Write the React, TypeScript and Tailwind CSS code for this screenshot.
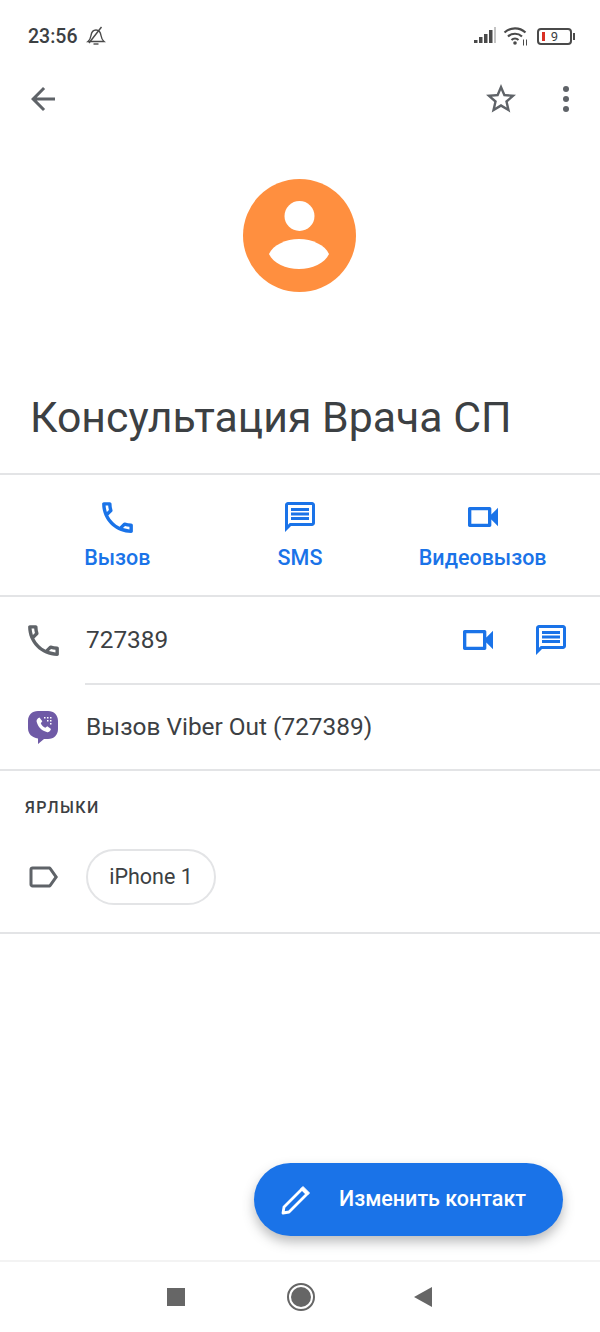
import React from "react";

const PHONE = "M6.54 5c.06.89.21 1.76.45 2.59l-1.2 1.2c-.41-1.2-.67-2.47-.76-3.79h1.51m9.86 12.02c.85.24 1.72.39 2.6.45v1.49c-1.32-.09-2.59-.35-3.8-.75l1.2-1.19M7.5 3H4c-.55 0-1 .45-1 1 0 9.39 7.61 17 17 17 .55 0 1-.45 1-1v-3.49c0-.55-.45-1-1-1-1.24 0-2.45-.2-3.57-.57-.1-.04-.21-.05-.31-.05-.26 0-.51.1-.71.29l-2.2 2.2c-2.83-1.45-5.15-3.76-6.59-6.59l2.2-2.2c.28-.28.36-.67.25-1.02C8.7 6.45 8.5 5.25 8.5 4c0-.55-.45-1-1-1z";
const MESSAGE = "M20 2H4c-1.1 0-2 .9-2 2v18l4-4h14c1.1 0 2-.9 2-2V4c0-1.1-.9-2-2-2zm0 14H5.17L4 17.17V4h16v12zM6 12h12v2H6zM6 9h12v2H6zM6 6h12v2H6z";
const VIDEO = "M15 8v8H5V8h10m1-2H4c-.55 0-1 .45-1 1v10c0 .55.45 1 1 1h12c.55 0 1-.45 1-1v-3.5l4 4v-11l-4 4V7c0-.55-.45-1-1-1z";
const LABEL = "M17.63 5.84C17.27 5.33 16.67 5 16 5L5 5.01C3.9 5.01 3 5.9 3 7v10c0 1.1.9 1.99 2 1.99L16 19c.67 0 1.27-.33 1.63-.84L22 12l-4.37-6.16zM16 17H5V7h11l3.55 5L16 17z";
const ARROW = "M20 11H7.83l5.59-5.59L12 4l-8 8 8 8 1.41-1.41L7.83 13H20v-2z";
const STAR = "M22 9.24l-7.19-.62L12 2 9.19 8.63 2 9.24l5.46 4.73L5.82 21 12 17.27 18.18 21l-1.63-7.03L22 9.24zM12 15.4l-3.76 2.27 1-4.28-3.32-2.88 4.38-.38L12 6.1l1.71 4.04 4.38.38-3.32 2.88 1 4.28L12 15.4z";

function Icon({ d, size, className }: { d: string; size: number; className?: string }) {
    return (
        <svg width={size} height={size} viewBox="0 0 24 24" fill="currentColor" className={className}>
            <path d={d} />
        </svg>
    );
}

function ViberIcon() {
    return (
        <svg width="32" height="34" viewBox="0 0 32 34">
            <path d="M11 1h10c6 0 10 4 10 10v8c0 6-4 10-10 10h-4l-6 5v-5.500C5 27.500 1 24 1 18v-7C1 5 5 1 11 1z" fill="#6f5aa6" />
            <path d="M10.500 8.500l2-1 2.800 3.800-1.500 2c.8 2 2.500 3.700 4.500 4.500l2-1.500 3.700 2.800-1 2c-.7 1-2 1.300-3.300.9-5.500-1.800-8.500-4.800-10-10-.3-1.400 0-2.700 1.300-3.500z" fill="#fff" />
            <g fill="#fff">
                <rect x="17" y="7" width="1.500" height="1.500" />
                <rect x="20" y="7" width="1.500" height="1.500" />
                <rect x="23" y="7" width="1.500" height="1.500" />
                <rect x="20" y="10" width="1.500" height="1.500" />
                <rect x="23" y="10" width="1.500" height="1.500" />
                <rect x="23" y="13" width="1.500" height="1.500" />
            </g>
        </svg>
    );
}

function StatusIcons() {
    return (
        <div className="flex items-center text-[#4a4a4a]">
            <svg width="24" height="18" viewBox="0 0 24 18" fill="currentColor" className="ml-[1px]">
                <rect x="1" y="13" width="3.500" height="3" />
                <rect x="6" y="10" width="3.500" height="6" />
                <rect x="11" y="7" width="3.500" height="9" />
                <rect x="16" y="3" width="3.500" height="13" />
                <rect x="21" y="0" width="2" height="16" fill="#c4c4c4" />
            </svg>
            <svg width="26" height="20" viewBox="0 0 26 20" fill="none" stroke="currentColor" strokeWidth="2.200" className="ml-[6px]">
                <path d="M1.500 6.500c6-5.500 15-5.500 21 0" />
                <path d="M5 10.500c4-3.700 10-3.700 14 0" />
                <path d="M8.500 14c2-1.800 5-1.800 7 0" />
                <circle cx="12" cy="17" r="1.800" fill="currentColor" stroke="none" />
                <path d="M20.500 13.500v6M23.500 13.500v6" strokeWidth="1" />
            </svg>
            <div className="ml-[8px] flex items-center">
                <div className="relative flex h-[17px] w-[35px] items-center justify-center rounded-[4px] border-2 border-[#4a4a4a]">
                    <div className="absolute left-[3px] h-[9px] w-[3px] bg-[#d93025]" />
                    <span className="text-[13px] leading-none text-[#3c4043]">9</span>
                </div>
                <div className="ml-[1px] h-[7px] w-[2px] bg-[#4a4a4a]" />
            </div>
        </div>
    );
}

function ActionButton({ d, size, label }: { d: string; size: number; label: string }) {
    return (
        <div className="flex flex-col items-center">
            <div className="flex h-[44px] items-center justify-center">
                <Icon d={d} size={size} />
            </div>
            <span className="mt-[4px] text-[21.500px] leading-[30px] font-medium whitespace-nowrap">{label}</span>
        </div>
    );
}

export default function App() {
    return (
        <div className="relative flex h-[1332px] w-[600px] flex-col overflow-hidden bg-white font-['Roboto',sans-serif] text-[#3c4043]">
            {/* status bar */}
            <div className="flex h-[72px] shrink-0 items-center justify-between pr-[25px] pl-[28px]">
                <div className="flex items-center">
                    <span className="pt-[2px] text-[19.500px] font-medium text-[#3c4043]">23:56</span>
                    <svg width="20" height="20" viewBox="0 0 20 20" fill="none" stroke="#4a4a4a" strokeWidth="1.400" className="ml-[9px]">
                        <path d="M2 15.500c2-1.500 2.500-3 3-6 .5-3.500 2.500-5.500 5-5.500s4.500 2 5 5.500c.5 3 1 4.500 3 6z" />
                        <path d="M7.500 18h5" />
                        <path d="M3 17L15.500 1" />
                    </svg>
                </div>
                <StatusIcons />
            </div>

            {/* toolbar */}
            <div className="flex h-[54px] shrink-0 items-center text-[#5f6368]">
                <div className="flex w-[86px] justify-center">
                    <Icon d={ARROW} size={36} />
                </div>
                <div className="mr-[44px] ml-auto">
                    <Icon d={STAR} size={36} />
                </div>
                <div className="mr-[31px] flex flex-col gap-[4px]">
                    <div className="h-[6px] w-[6px] rounded-full bg-[#5f6368]" />
                    <div className="h-[6px] w-[6px] rounded-full bg-[#5f6368]" />
                    <div className="h-[6px] w-[6px] rounded-full bg-[#5f6368]" />
                </div>
            </div>

            {/* avatar */}
            <div className="flex shrink-0 justify-center pt-[53px] pr-[1px]">
                <svg width="113" height="113" viewBox="0 0 113 113">
                    <circle cx="56.500" cy="56.500" r="56.500" fill="#ff8f3f" />
                    <circle cx="56.500" cy="37" r="15" fill="#fff" />
                    <path d="M26 75C30 66 43 60 56 60S82 66 86 75C82 84 69 90 56 90S30 84 26 75z" fill="#fff" />
                </svg>
            </div>

            {/* name */}
            <div className="mt-[95px] flex h-[88px] shrink-0 items-start border-b-2 border-[#e3e4e6] pt-[4px] pl-[30px]">
                <h1 className="text-[42.800px] leading-[52px] font-normal whitespace-nowrap">Консультация Врача СП</h1>
            </div>

            {/* actions */}
            <div className="grid h-[122px] shrink-0 grid-cols-3 border-b-2 border-[#e3e4e6] px-[26px] pt-[20px] text-[#1a73e8]">
                <ActionButton d={PHONE} size={41} label="Вызов" />
                <ActionButton d={MESSAGE} size={36} label="SMS" />
                <ActionButton d={VIDEO} size={40} label="Видеовызов" />
            </div>

            {/* phone rows */}
            <div className="flex h-[86px] shrink-0 items-center">
                <div className="flex w-[86px] shrink-0 justify-center text-[#5f6368]">
                    <Icon d={PHONE} size={41} />
                </div>
                <span className="pb-[1px] text-[24.400px] leading-[30px]">727389</span>
                <div className="ml-auto flex items-center gap-[35px] pr-[31px] text-[#1a73e8]">
                    <Icon d={VIDEO} size={40} />
                    <Icon d={MESSAGE} size={36} />
                </div>
            </div>
            <div className="ml-[85px] h-[2px] shrink-0 bg-[#e3e4e6]" />
            <div className="flex h-[86px] shrink-0 items-center border-b-2 border-[#e3e4e6]">
                <div className="flex w-[86px] shrink-0 justify-center">
                    <ViberIcon />
                </div>
                <span className="pb-[1px] text-[24.400px] leading-[30px]">Вызов Viber Out (727389)</span>
            </div>

            {/* labels */}
            <div className="flex h-[163px] shrink-0 flex-col border-b-2 border-[#e3e4e6]">
                <div className="mt-[25px] pl-[25px] text-[16px] leading-[24px] font-medium tracking-[0.09em]">ЯРЛЫКИ</div>
                <div className="mt-[29px] flex items-center">
                    <div className="flex w-[86px] shrink-0 justify-center text-[#5f6368]">
                        <Icon d={LABEL} size={36} />
                    </div>
                    <div className="flex h-[56px] w-[130px] items-center justify-center rounded-full border-2 border-[#e3e4e6] pt-[1px] text-[21.500px] font-normal">
                        iPhone 1
                    </div>
                </div>
            </div>

            {/* nav bar */}
            <div className="mt-auto flex h-[72px] shrink-0 items-center border-t-2 border-[#f3f3f3] pl-[167px]">
                <div className="h-[18px] w-[18px] bg-[#666666]" />
                <div className="ml-[102px] flex h-[28px] w-[28px] items-center justify-center rounded-full border-2 border-[#666666]">
                    <div className="h-[20px] w-[20px] rounded-full bg-[#666666]" />
                </div>
                <svg width="18" height="20" viewBox="0 0 18 20" fill="#666666" className="ml-[99px]">
                    <path d="M0 10L18 0v20z" />
                </svg>
            </div>

            {/* edit fab */}
            <div className="absolute top-[1163px] left-[254px] flex h-[73px] w-[309px] items-center rounded-full bg-[#1a73e8] text-white shadow-[0_6px_12px_rgba(60,64,67,0.35)]">
                <svg width="32" height="32" viewBox="0 0 32 32" fill="none" stroke="#fff" strokeWidth="2.800" strokeLinejoin="round" className="ml-[26px]">
                    <path d="M3 29l1-6L22 5l5 5L9 28z" />
                    <path d="M23 2.500l6.500 6.500-2 2-6.500-6.500z" fill="#fff" strokeWidth="1" />
                </svg>
                <span className="ml-[27px] text-[21.500px] font-medium whitespace-nowrap">Изменить контакт</span>
            </div>
        </div>
    );
}
